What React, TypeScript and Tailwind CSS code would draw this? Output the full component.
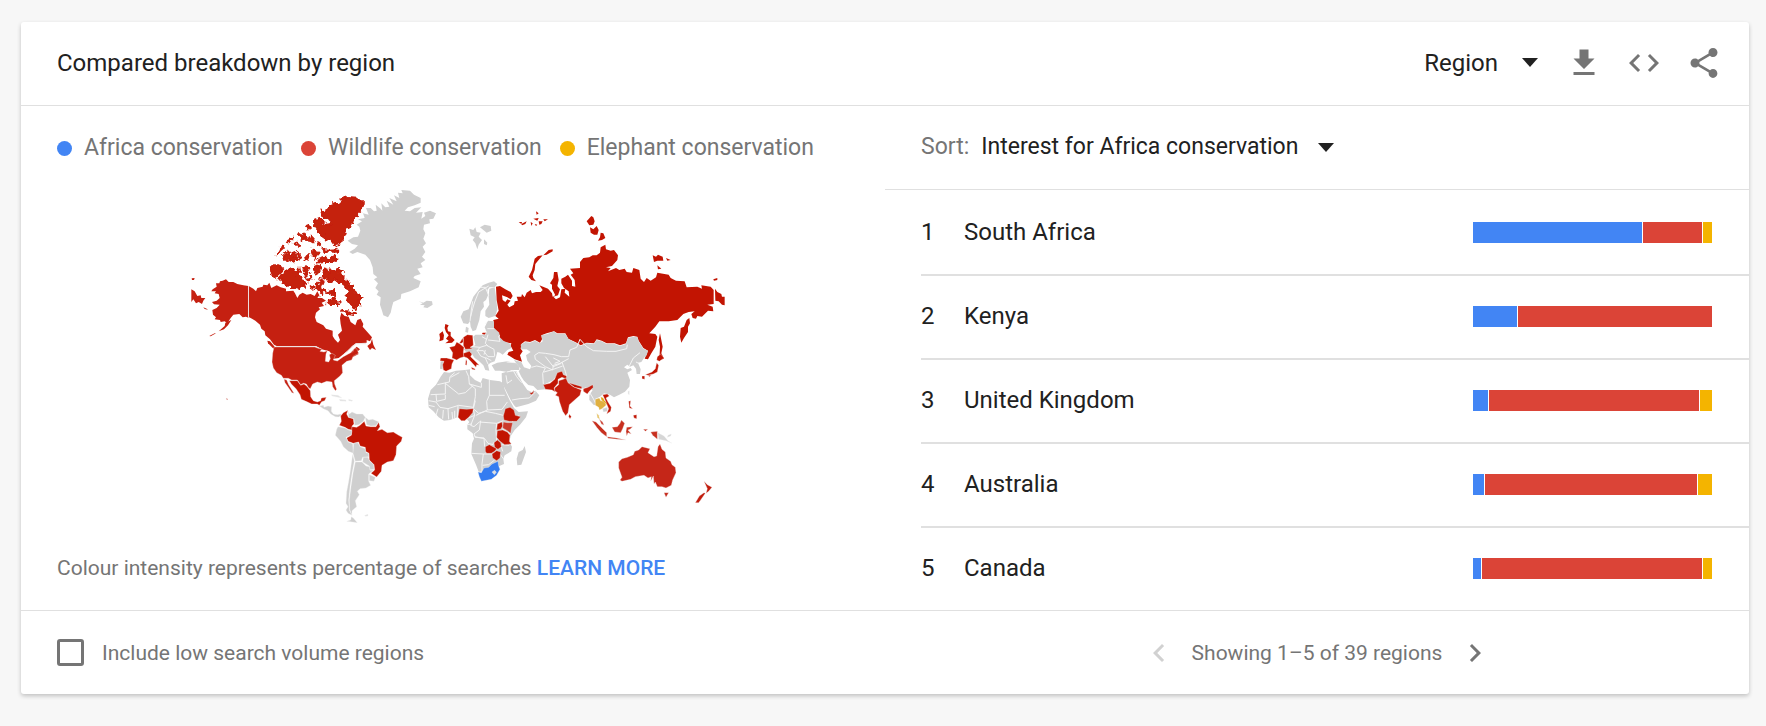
import React, { useState } from 'react';

const terms = [
  { name: 'Africa conservation', color: '#4285f4' },
  { name: 'Wildlife conservation', color: '#db4437' },
  { name: 'Elephant conservation', color: '#f4b400' },
];

const regions = [
  { name: 'South Africa', values: [169, 59, 9] },
  { name: 'Kenya', values: [44, 194] },
  { name: 'United Kingdom', values: [15, 210, 12] },
  { name: 'Australia', values: [11, 212, 14] },
  { name: 'Canada', values: [8, 220, 9] },
];

const GREY = '#cfcfcf';
const RED = '#c21402';
const RED_NA = '#c52011';

type Shape = [fill: string, points: string];

// Each sheet of the map has its own origin, three units to a pixel
const northAmerica: Shape[] = [
  // Greenland, Iceland
  [GREY, '503,182 520,172 534,170 541,152 538,140 530,134 546,124 534,118 554,114 549,100 566,104 558,84 572,84 582,94 590,92 587,74 602,86 607,92 604,70 616,82 628,80 620,62 640,74 628,54 650,64 642,46 658,54 654,38 668,40 664,30 690,32 702,44 722,54 722,68 704,76 684,82 674,92 690,94 704,84 724,82 708,98 728,96 724,116 736,108 732,98 750,92 768,100 760,116 748,118 750,130 732,134 730,148 736,160 730,176 738,190 728,200 736,216 726,230 736,240 722,250 728,262 712,266 722,282 704,288 700,294 722,304 716,322 690,334 664,342 662,356 640,366 636,380 632,398 624,412 610,406 606,392 600,374 602,352 590,344 596,334 586,324 594,310 582,298 592,292 580,282 578,262 570,240 556,224 532,216 518,222 508,216 524,206 534,196 516,192'],
  [GREY, '716,364 730,368 740,362 756,364 758,374 742,384 730,382 734,376 720,374 728,370'],
  // Alaska
  [RED_NA, '205,318 190,316 172,312 160,306 146,306 138,298 128,302 120,304 118,310 108,310 110,320 98,328 94,334 108,334 104,340 116,342 119,354 110,362 96,366 102,373 119,374 110,384 97,390 99,404 108,412 104,418 120,420 122,426 134,424 142,430 152,414 160,404 178,402 188,412 198,410 205,413'],
  [RED_NA, '136,428 154,420 144,436 132,448 116,454 134,438'],
  [RED_NA, '88,468 104,460 108,460 92,469'],
  [RED_NA, '34,328 44,334 52,348 62,346 64,354 76,354 70,362 66,372 56,366 48,370 40,358 34,366'],
  [RED_NA, '35,295 44,294 42,300 36,300'],
  [RED_NA, '70,382 80,386 84,389 74,387'],
  // Canada
  [RED_NA, '206,318 220,326 228,334 232,324 248,320 250,314 262,316 268,308 274,324 290,316 302,322 318,326 318,334 340,332 345,340 352,354 358,344 368,338 380,344 392,342 404,348 412,334 418,346 412,354 426,354 438,362 425,368 432,378 416,382 420,388 408,398 405,412 410,426 430,436 438,446 458,452 458,468 464,478 474,488 480,480 474,464 486,452 482,432 480,414 484,398 494,408 506,410 512,426 526,436 532,420 542,416 550,432 548,440 560,454 576,472 570,484 560,480 560,488 528,490 516,498 502,514 488,524 476,534 462,536 460,528 448,514 425,508 408,498 290,498 282,494 270,478 256,466 254,454 244,446 240,434 226,422 216,416 206,411'],
  [RED_NA, '262,482 270,484 284,500 284,508 276,502 264,490'],
  [RED_NA, '514,516 530,500 540,508 528,518 536,522 520,530 510,528'],
  [RED_NA, '562,498 572,490 576,476 580,494 588,510 576,504 570,510'],
];

const arctic: Shape[] = [
  // Ellesmere
  [RED_NA, '424,92 442,88 456,72 478,66 488,54 506,50 530,52 550,72 546,88 530,104 516,120 512,140 496,150 488,170 486,184 476,198 462,194 452,180 430,178 426,166 412,156 404,130 406,112 424,122 434,134 452,130 444,120 430,112 424,98'],
  [RED_NA, '428,206 450,208 474,206 472,216 436,216'],
  [RED_NA, '432,232 446,236 462,228 470,236 468,250 440,246 418,250 414,238'],
  [RED_NA, '400,208 410,210 410,230 402,236 398,220'],
  [RED_NA, '382,222 392,222 386,240 370,238'],
  [RED_NA, '360,158 378,164 390,182 378,184 364,172'],
  [RED_NA, '392,168 402,180 398,190 390,184'],
  [RED_NA, '412,186 424,192 420,200 410,194'],
  [RED_NA, '382,138 390,142 386,148'],
  [RED_NA, '322,182 340,170 338,180 326,188'],
  [RED_NA, '290,222 298,204 308,198 312,206 298,218'],
  [RED_NA, '308,228 324,212 330,222 342,216 346,230 356,238 340,246 324,240 314,240'],
  [RED_NA, '344,190 356,192 360,200 348,198'],
  [RED_NA, '350,216 358,222 356,232 350,226'],
  // Banks, Victoria
  [RED_NA, '278,252 296,252 310,264 300,276 290,294 276,286 272,272'],
  [RED_NA, '302,282 318,272 336,266 350,274 356,264 358,282 368,300 374,314 360,328 340,322 318,322 314,310 300,302'],
  [RED_NA, '368,266 382,264 386,278 376,286'],
  [RED_NA, '376,292 394,290 396,306 384,308'],
  [RED_NA, '402,260 416,256 420,270 410,280 402,274'],
  [RED_NA, '396,322 408,316 404,328'],
  // Baffin
  [RED_NA, '430,270 438,264 448,278 454,268 478,266 490,276 478,278 492,290 490,298 506,304 504,314 520,322 520,332 534,344 548,352 538,362 542,374 528,372 532,386 518,382 508,370 504,358 496,346 504,332 490,310 470,300 456,306 448,300 432,296 428,284'],
  [RED_NA, '412,306 424,296 430,304 424,318 436,334 424,346 412,330 416,318'],
  [RED_NA, '440,336 460,332 460,346 446,342'],
  [RED_NA, '448,360 462,354 466,364 480,366 472,376 454,376 444,368'],
  [RED_NA, '490,392 516,394 530,400 520,406 500,402'],
];

const southAmerica: Shape[] = [
  // Contiguous United States, Mexico
  [RED_NA, '282,21 405,21 412,24 426,28 420,34 432,36 442,32 438,42 436,64 446,66 451,56 448,44 456,40 466,46 460,60 472,63 490,50 505,42 520,34 522,26 530,26 536,40 520,48 515,60 500,64 486,76 488,98 480,108 463,122 464,132 470,148 466,152 458,140 456,126 440,124 425,130 412,126 398,132 391,146 386,144 379,132 370,130 362,134 352,120 335,120 325,115 310,115 304,106 290,98 280,84 276,66 278,40'],
  [RED, '328,122 352,122 362,136 372,132 380,138 391,152 392,170 400,182 412,186 422,182 424,174 439,172 434,182 425,185 418,196 412,192 395,192 378,184 364,178 360,164 348,146 334,132'],
  [RED_NA, '312,118 320,120 326,134 342,160 336,158 322,138 315,128'],
  [RED_NA, '138,174 144,178 141,180'],
  // Central America, Caribbean
  [GREY, '418,198 430,196 432,202 444,198 455,200 454,214 460,222 472,224 482,222 484,226 476,231 466,230 452,222 444,212 430,206'],
  ['#e2e2e2', '454,164 474,166 486,174 474,172 456,168'],
  ['#e2e2e2', '478,178 498,180 498,184 480,183'],
  ['#e2e2e2', '506,178 518,181 516,184 506,182'],
  // Colombia, Brazil
  [RED, '482,228 490,218 504,211 500,222 505,232 520,236 522,252 516,258 516,270 505,268 495,262 478,256 484,244'],
  [RED, '500,294 514,286 516,260 530,262 540,256 553,244 558,258 572,260 588,260 596,247 600,260 592,272 606,268 622,278 640,276 656,286 667,292 664,304 650,318 648,344 640,362 622,366 606,376 604,394 590,411 573,400 584,390 582,374 568,360 567,340 556,334 556,322 540,318 536,306 520,310 504,304'],
  [GREY, '505,214 508,222 516,216 530,222 548,222 556,232 550,244 536,254 524,256 522,236 506,232'],
  [GREY, '556,232 566,240 578,238 596,245 588,257 572,258 560,254'],
  [GREY, '474,260 495,264 505,270 516,272 514,284 498,292 504,306 518,311 520,340 505,334 490,320 482,304 466,286 470,268'],
  [GREY, '521,310 534,308 540,320 556,326 558,338 566,340 566,350 548,352 544,362 526,364 519,340'],
  [GREY, '550,352 564,352 568,362 581,374 582,388 570,389 568,378 548,366'],
  [GREY, '518,343 523,364 516,400 510,440 506,480 508,510 516,526 504,520 498,510 504,500 498,490 500,456 505,430 510,400'],
  [GREY, '526,366 546,366 558,378 568,380 570,391 580,391 566,402 566,424 572,436 558,444 540,446 532,454 538,464 526,482 530,500 516,512 516,526 509,508 508,480 513,440 519,400'],
  [GREY, '568,404 586,412 582,424 568,422'],
  [GREY, '514,530 520,534 532,548 518,546 500,544 512,540'],
  ['#e2e2e2', '554,526 564,523 564,528 556,529'],
];

const northEurasia: Shape[] = [
  // Svalbard, Scandinavia
  [GREY, '148,146 160,150 166,142 170,156 182,158 176,170 186,180 176,194 172,208 166,190 158,180 164,172 152,166'],
  [GREY, '180,142 194,134 212,138 214,152 200,158 190,150'],
  [GREY, '192,178 202,188 200,196 192,192'],
  [GREY, '122,410 130,394 146,388 154,366 160,350 174,332 188,316 206,308 222,304 232,312 224,322 208,322 202,330 204,346 198,360 190,366 192,380 182,394 178,420 168,450 158,454 152,440 150,424 144,432 130,430'],
  [GREY, '208,326 224,322 228,350 232,388 226,408 206,414 196,408 196,392 208,374 206,350'],
  [GREY, '138,440 146,444 144,458 136,456'],
  // Britain and Ireland
  [RED, '76,432 86,436 82,444 84,454 92,456 92,468 104,480 96,488 76,490 86,482 78,476 86,466 78,456 74,444'],
  [RED, '58,462 68,454 72,466 70,480 58,484 60,474'],
  // Russia
  [RED, '228,320 240,318 256,328 272,336 278,348 272,358 262,352 246,346 248,360 256,366 262,358 272,362 262,374 268,382 282,374 284,364 294,362 290,350 304,350 306,342 314,352 320,338 332,330 336,340 348,336 362,336 368,330 358,316 384,326 396,340 398,350 406,346 396,326 396,314 390,310 400,294 402,276 412,276 416,300 412,318 420,328 414,346 400,350 408,358 420,352 424,328 436,326 434,338 448,350 446,334 432,324 424,310 424,296 436,290 444,284 456,302 456,318 466,320 464,300 452,284 460,280 450,266 480,264 480,246 490,234 508,232 518,226 530,226 540,218 542,202 556,194 558,208 572,212 582,210 594,226 592,240 576,258 558,262 572,264 564,274 588,264 598,270 614,266 620,276 636,278 640,264 658,270 662,296 672,306 680,294 692,302 708,292 712,278 746,284 752,294 768,302 794,304 800,322 832,320 846,326 844,316 872,320 881,330 881,372 862,374 878,380 880,394 864,392 846,410 832,408 828,416 818,414 814,402 824,394 806,396 790,402 772,420 746,424 718,424 706,440 688,460 706,462 712,470 706,500 694,520 684,538 674,536 684,512 670,504 656,482 652,470 640,468 624,472 618,490 600,496 584,490 560,490 545,482 530,478 522,490 500,488 482,496 470,488 445,476 436,460 412,460 402,454 380,460 364,466 366,478 360,488 345,480 330,486 315,484 304,492 302,506 308,514 300,526 306,545 284,538 262,524 266,516 280,512 272,498 274,490 250,486 238,474 240,466 228,452 222,444 220,420 236,416 226,408 236,392 230,360'],
  [RED, '885,326 892,336 904,342 906,350 914,350 914,376 906,374 896,364 886,362'],
  [RED, '808,414 810,430 804,440 804,456 792,474 784,488 780,470 782,444 792,440 800,420'],
  [RED, '720,460 724,480 728,500 724,520 732,536 718,540 720,500 716,480'],
  [RED, '398,208 398,214 380,224 368,226 354,242 346,252 344,270 338,286 340,294 348,304 334,300 326,290 336,270 344,236 354,228 370,226 386,210'],
  [RED, '500,124 514,108 520,112 524,124 520,134 508,136'],
  [RED, '510,142 520,148 530,138 536,150 532,164 522,164 512,158'],
  [RED, '534,182 540,172 542,158 550,160 556,174 546,180'],
  [RED, '698,226 708,230 714,224 728,230 730,242 712,242 702,246'],
  [RED, '738,234 752,240 742,242'],
  [RED, '712,256 724,266 714,268'],
  [RED, '880,298 892,294 892,300 882,302'],
  [RED, '296,126 306,126 304,132'],
  [RED, '304,132 320,124 316,132 306,136'],
  [RED, '340,116 356,114 352,122'],
  [RED, '356,124 368,124 364,132 358,134'],
  [RED, '348,94 356,100 350,104'],
  [RED, '370,118 384,118 374,124'],
  [RED, '332,126 338,130 334,138'],
  [RED, '344,132 352,134 348,138'],
  [RED, '188,458 198,458 194,464 186,462'],
];

const southEurasia: Shape[] = [
  // Eastern Europe, Turkey, Portugal
  [GREY, '160,20 166,14 196,14 200,6 194,-8 204,-28 222,-26 222,-6 238,8 238,20 250,32 272,42 274,54 262,60 248,74 240,68 232,66 228,82 224,94 212,98 204,104 208,122 196,120 190,106 176,92 164,84 156,72 150,66 138,66 132,58 146,52 160,50 166,44'],
  [GREY, '215,106 232,98 262,94 288,100 298,110 298,120 275,120 262,126 240,122 225,122'],
  [GREY, '62,94 70,94 68,118 60,116'],
  // Asia
  [GREY, '282,90 304,96 312,112 330,118 334,108 322,92 318,76 332,66 320,58 304,58 302,44 316,36 330,38 345,32 360,40 368,34 364,16 382,12 402,4 412,12 436,12 446,28 470,40 482,48 500,40 522,42 530,30 545,34 560,42 584,42 600,48 618,42 624,24 640,20 652,22 656,34 670,56 684,62 680,76 672,84 664,96 654,98 662,118 660,132 650,132 648,116 640,106 630,110 622,104 612,112 622,118 632,114 636,120 622,128 630,150 628,170 615,185 598,194 582,202 570,194 552,190 540,200 526,206 530,222 522,226 508,210 508,196 518,180 500,172 484,176 450,164 430,145 415,130 400,150 372,164 378,178 352,180 340,168 325,165 312,152 304,140 296,124 302,116 290,102'],
  [GREY, '245,130 265,124 290,124 296,138 308,160 322,180 334,186 346,182 358,196 348,212 325,222 288,232 282,226 272,210 258,182 246,158'],
  // Africa, Madagascar
  [GREY, '72,126 88,128 108,122 135,120 150,118 150,136 165,150 182,158 188,144 210,150 240,154 250,160 254,178 262,196 270,212 282,234 296,246 324,244 318,262 300,284 284,300 272,318 268,336 276,350 274,364 254,376 250,386 252,402 238,408 230,420 176,425 168,404 154,372 156,340 162,326 158,310 142,298 142,284 148,276 138,264 112,262 90,270 72,272 56,262 40,244 26,232 24,206 32,180 48,164 62,140'],
  [GREY, '314,348 318,366 304,404 292,406 290,386 296,366 308,360'],
];

const southCountries: Shape[] = [
  [RED, '114,262 118,236 140,238 160,236 158,248 146,262 134,272 124,272'],
  [RED, '250,258 256,236 270,232 282,240 286,256 302,260 290,274 268,274 252,270'],
  [RED, '232,282 246,276 248,288 242,298 230,300'],
  ['#cb3a2b', '250,276 262,278 278,278 274,296 272,310 262,302 248,294'],
  [RED, '232,302 248,300 262,306 270,316 268,334 274,342 254,344 240,334 230,322'],
  [RED, '222,338 232,330 242,338 244,350 234,358 224,352'],
  [RED, '196,350 208,344 222,352 230,356 224,364 214,370 200,370 196,364'],
  [RED, '216,372 230,362 242,366 240,384 230,392 218,384'],
  ['#347cf1', '174,426 184,428 192,414 206,412 216,402 234,394 236,408 240,418 230,436 214,448 184,454 178,440'],
  ['#dddddd', '216,426 224,421 229,427 223,434'],
  // Western Europe
  [RED, '130,22 142,14 158,16 160,46 150,52 158,56 136,58 130,46'],
  [RED, '118,40 128,24 130,36 124,40'],
  [RED, '88,52 104,48 110,36 120,42 132,52 130,66 132,80 120,84 110,90 96,84 98,68'],
  [RED, '62,84 80,84 102,90 96,102 94,116 78,124 70,120 68,104 72,94 60,92'],
  [RED, '130,70 148,64 156,72 152,80 166,94 178,106 170,104 168,112 152,94 142,84 132,80'],
  [RED, '154,112 164,116 166,120 156,118'],
  [RED, '138,88 141,94 140,106 136,104'],
  [RED, '328,188 336,188 342,180 340,190 334,194'],
  // South Asia
  [RED, '370,164 390,160 404,148 412,128 426,124 430,134 440,138 438,146 426,142 414,148 414,160 402,174 406,186 396,180 376,178'],
  ['#c51c0c', '416,152 430,148 438,144 444,158 460,170 484,180 480,196 464,210 448,224 444,248 437,257 428,244 418,214 416,200 406,196 412,188 404,182 404,174 416,164'],
  [RED, '446,158 466,164 486,170 484,176 464,172'],
  ['#c51c0c', '490,176 504,172 518,164 520,172 508,184 502,192 496,188 490,184'],
  [RED, '448,252 454,260 450,266 446,260'],
  // South-east Asia
  ['#e0b040', '526,208 538,204 542,212 556,214 558,226 546,236 538,240 536,232 526,226'],
  ['#e5a912', '542,200 550,204 554,212 564,222 566,230 556,220 544,210'],
  ['#e8c25f', '530,250 536,256 540,270 532,262'],
  [GREY, '548,236 562,232 562,244 550,246'],
  [RED, '548,194 562,192 568,198 558,204 564,216 574,232 572,244 560,252 566,236 558,216'],
  ['#cb3a2b', '538,268 548,276 552,286 544,282'],
  ['#c8301f', '516,272 528,276 548,296 560,308 560,320 544,308 530,292'],
  ['#c8301f', '562,320 590,324 618,330 592,328 564,325'],
  ['#c8301f', '576,292 592,290 600,280 604,270 614,280 608,296 602,308 584,306'],
  ['#c8301f', '620,292 638,290 630,298 624,300 634,312 624,308 620,318 618,304'],
  [RED, '626,214 632,212 630,228 638,236 628,234'],
  [RED, '640,256 650,254 650,266 642,264'],
  ['#c8301f', '670,298 684,298 676,304'],
  ['#c8301f', '692,306 712,304 712,328 698,316'],
  ['#d6d6d6', '714,308 732,318 744,332 756,340 738,332 716,328'],
  ['#d6d6d6', '744,316 754,312 752,318 742,322'],
  ['#e2e2e2', '624,184 628,182 628,194 624,192'],
  // Japan
  [RED, '712,80 722,72 732,84 718,94 710,90'],
  [RED, '710,98 716,106 712,126 700,132 684,136 676,134 696,126 706,116'],
  [RED, '666,138 674,138 674,148 666,146'],
  [RED, '684,136 694,136 688,140'],
  // Australia, New Zealand
  ['#c52618', '596,396 606,386 622,382 640,374 644,364 656,360 666,350 690,356 684,368 702,380 710,378 714,350 720,342 726,358 736,366 738,384 752,394 756,404 766,412 768,428 758,450 754,466 738,474 726,470 712,470 706,456 702,462 700,438 692,454 694,440 684,444 672,436 646,440 632,448 606,454 600,450 606,442 596,414'],
  ['#c52618', '732,488 746,488 738,502'],
  ['#c21c0c', '852,454 862,464 876,472 866,484 858,490 862,476'],
  ['#c21c0c', '826,518 838,498 852,488 856,490 842,510 836,518'],
];

const southBorders =
  'M186,20L200,28 204,14M160,50 180,52 200,46 222,58 224,78M200,26 196,40 204,48M204,30 240,34M236,18 240,34M170,62 190,62 204,80 224,80M180,52 172,62 182,78 196,84 204,102M196,60 192,74M202,-4 222,-4M196,82 214,92M260,96 284,98' +
  'M344,76 356,68 376,70 402,74 424,80 446,80 450,60 470,52 480,28M344,76 346,88 376,110 398,120 400,106 420,100 446,86M376,80 400,110 424,100M334,112 350,108 376,114 368,130 370,162M372,126 400,118 428,108M400,84 420,94 404,100M480,28 500,50 520,62 560,64 588,64 620,56 622,44M660,68 640,84 628,108M648,96 656,100M426,96 436,124 440,140' +
  'M260,126 280,122 290,140 305,158M258,136 262,160 276,150M276,210 300,206 328,204 348,184M288,124 298,142M508,186 520,206 528,222' +
  'M52,164 88,156 90,140 104,128M76,158 76,192 32,194M76,160 116,192 136,188 160,166M138,122 146,140 148,162 184,172M148,162 166,176 166,200M184,158 184,172M208,150 208,196 254,196M208,196 200,214 202,240 168,256M48,192 50,214 76,208 76,194M26,212 48,216 60,232 84,236 116,226 160,232 166,200M26,226 44,230M54,236 48,256M70,240 68,266M84,236 86,268M96,246 98,268M104,242 104,264M166,212 160,236 176,250 196,244 226,250 250,256M160,238 164,256 140,266M164,256 152,286 162,290 178,276 230,280M202,240 246,238 262,216M250,272 230,280 228,300 230,336 218,340M140,284 156,282M182,272 178,300 162,312 166,322 192,324 194,350M164,320 194,326 204,340 220,344M154,370 190,372 198,372 216,372M190,372 186,402 186,424M188,406 206,404 224,390M246,296 272,312M276,276 298,256M246,344 268,346M244,350 248,364M114,228 112,262M250,386 240,372M92,142 118,128';

const northBorders =
  'M206,318L176,336 164,366 158,386 152,410M158,364 154,390 150,424M180,322 196,322 206,346M196,430 214,424M200,438 222,440M196,452 212,452 222,446';

const Shapes = ({ shapes }: { shapes: Shape[] }) => (
  <>
    {shapes.map(([fill, points]) => (
      <polygon key={points} points={points} fill={fill} />
    ))}
  </>
);

const WorldMap = () => (
  <svg viewBox="173 186 560 344" className="mx-auto mt-5 block w-[560px] max-w-full" role="img" aria-label="World map">
    <defs>
      <filter id="fjords" x="-5%" y="-5%" width="110%" height="110%">
        <feTurbulence type="fractalNoise" baseFrequency="0.07" numOctaves="2" seed="4" />
        <feDisplacementMap in="SourceGraphic" scale="26" xChannelSelector="R" yChannelSelector="G" />
      </filter>
    </defs>
    <g transform="translate(180 180) scale(0.33333)">
      <Shapes shapes={northAmerica} />
      <g filter="url(#fjords)" stroke={RED_NA} strokeWidth="4">
        <Shapes shapes={arctic} />
      </g>
      <path d="M205.500,318V412M288,499.500H405L425,508M490,524L528,491H558" fill="none" stroke="#eedede" strokeWidth="3" />
    </g>
    <g transform="translate(180 340) scale(0.33333)" stroke="#f4f4f4" strokeWidth="1">
      <Shapes shapes={southAmerica} />
    </g>
    <g transform="translate(420 180) scale(0.33333)">
      <Shapes shapes={northEurasia} />
      <path d={northBorders} fill="none" stroke="#f4f4f4" strokeWidth="3" />
    </g>
    <g transform="translate(420 330) scale(0.33333)">
      <Shapes shapes={southEurasia} />
      <path d={southBorders} fill="none" stroke="#f4f4f4" strokeWidth="3" />
      <g stroke="#f4f4f4" strokeWidth="1">
        <Shapes shapes={southCountries} />
      </g>
    </g>
  </svg>
);

const Caret = () => (
  <svg viewBox="0 0 16 9" className="pointer-events-none h-[9px] w-4 fill-[#212121]" aria-hidden="true">
    <path d="M0 0h16L8 9z" />
  </svg>
);

const Icon = ({ d }: { d: string }) => (
  <svg viewBox="0 0 24 24" className="h-9 w-9 fill-current" aria-hidden="true">
    <path d={d} />
  </svg>
);

const icons = {
  download: 'M19 9h-4V3H9v6H5l7 7 7-7zM5 18v2h14v-2H5z',
  embed: 'M9.400 16.600L4.800 12l4.600-4.600L8 6l-6 6 6 6 1.400-1.400zm5.200 0l4.600-4.600-4.600-4.600L16 6l6 6-6 6-1.400-1.400z',
  share:
    'M18 16.080c-.76 0-1.440.3-1.960.77L8.910 12.700c.05-.23.09-.46.09-.7s-.04-.47-.09-.7l7.050-4.110c.54.5 1.250.81 2.040.81 1.660 0 3-1.340 3-3s-1.340-3-3-3-3 1.340-3 3c0 .24.04.47.09.7L8.040 9.810C7.500 9.310 6.790 9 6 9c-1.660 0-3 1.340-3 3s1.340 3 3 3c.79 0 1.500-.31 2.040-.81l7.120 4.160c-.05.21-.08.43-.08.65 0 1.610 1.310 2.920 2.920 2.920s2.920-1.310 2.920-2.920-1.310-2.920-2.920-2.920z',
  left: 'M15.410 7.410L14 6l-6 6 6 6 1.410-1.410L10.830 12z',
  right: 'M10 6L8.590 7.410 13.170 12l-4.580 4.590L10 18l6-6z',
};

export default function App() {
  const [lowVolume, setLowVolume] = useState(false);

  return (
    <div className="min-h-screen bg-[#f7f7f7] pt-[22px] pr-[17px] pb-8 pl-[21px] font-[Roboto,sans-serif] text-2xl text-[#212121]">
      <section className="rounded-[3px] bg-white shadow-[0_2px_4px_rgba(0,0,0,0.22)]">
        {/* Header */}
        <header className="flex h-[84px] items-center justify-between border-b border-[#e0e0e0] pr-[27px] pb-0.5 pl-9">
          <h2>Compared breakdown by region</h2>
          <div className="flex items-center gap-7">
            <div className="flex items-center gap-6">
              <select aria-label="Resolution" className="field-sizing-content appearance-none bg-transparent">
                <option>Region</option>
                <option>City</option>
              </select>
              <Caret />
            </div>
            <div className="flex items-center gap-6 text-[#757575]">
              <button aria-label="Download CSV"><Icon d={icons.download} /></button>
              <button aria-label="Embed"><Icon d={icons.embed} /></button>
              <button aria-label="Share"><Icon d={icons.share} /></button>
            </div>
          </div>
        </header>

        <div className="grid grid-cols-2 border-b border-[#e0e0e0]">
          {/* Map */}
          <div className="pt-6 pb-6">
            <ul className="flex gap-[18px] px-9 text-[23px] text-[#757575]">
              {terms.map(term => (
                <li key={term.name} className="flex items-center gap-3 leading-9">
                  <span className="h-[15px] w-[15px] rounded-full" style={{ backgroundColor: term.color }} />
                  {term.name}
                </li>
              ))}
            </ul>
            <WorldMap />
            <p className="mt-5 px-9 text-[21px] leading-9 text-[#757575]">
              Colour intensity represents percentage of searches{' '}
              <a href="#" className="font-medium text-[#4285f4]">LEARN MORE</a>
            </p>
          </div>

          {/* Ranking */}
          <div>
            <div className="flex h-[84px] items-center border-b border-[#e0e0e0] pl-9 text-[23px]">
              <label htmlFor="sort" className="mr-3 text-[#757575]">Sort:</label>
              <select id="sort" className="field-sizing-content mr-5 appearance-none bg-transparent">
                <option>Interest for Africa conservation</option>
                <option>Interest for Wildlife conservation</option>
                <option>Interest for Elephant conservation</option>
              </select>
              <Caret />
            </div>
            <div className="pl-9">
              <table className="w-full border-separate border-spacing-0">
                <tbody className="[&>tr+tr>td]:border-t-2 [&>tr+tr>td]:border-[#e0e0e0] [&>tr+tr>td]:pb-0.5">
                  {regions.map((region, i) => (
                    <tr key={region.name}>
                      <td className="h-[84px] w-[43px]">{i + 1}</td>
                      <td>{region.name}</td>
                      <td className="w-[276px] pr-[37px]">
                        <div className="flex h-[21px] gap-px">
                          {region.values.map((value, j) => (
                            <div key={j} className="basis-0" style={{ flexGrow: value, backgroundColor: terms[j].color }} />
                          ))}
                        </div>
                      </td>
                    </tr>
                  ))}
                </tbody>
              </table>
            </div>
          </div>
        </div>

        {/* Footer */}
        <footer className="grid h-[83px] grid-cols-2 items-center text-[21px] text-[#757575]">
          <label className="flex items-center gap-[18px] pl-9">
            <input
              type="checkbox"
              checked={lowVolume}
              onChange={e => setLowVolume(e.target.checked)}
              className="h-[27px] w-[27px] appearance-none rounded-[3px] border-3 border-[#757575] checked:bg-[#757575]"
            />
            Include low search volume regions
          </label>
          <div className="flex items-center justify-center gap-[15px]">
            <button aria-label="Previous" disabled className="text-[#d1d1d1]"><Icon d={icons.left} /></button>
            Showing 1–5 of 39 regions
            <button aria-label="Next"><Icon d={icons.right} /></button>
          </div>
        </footer>
      </section>
    </div>
  );
}
